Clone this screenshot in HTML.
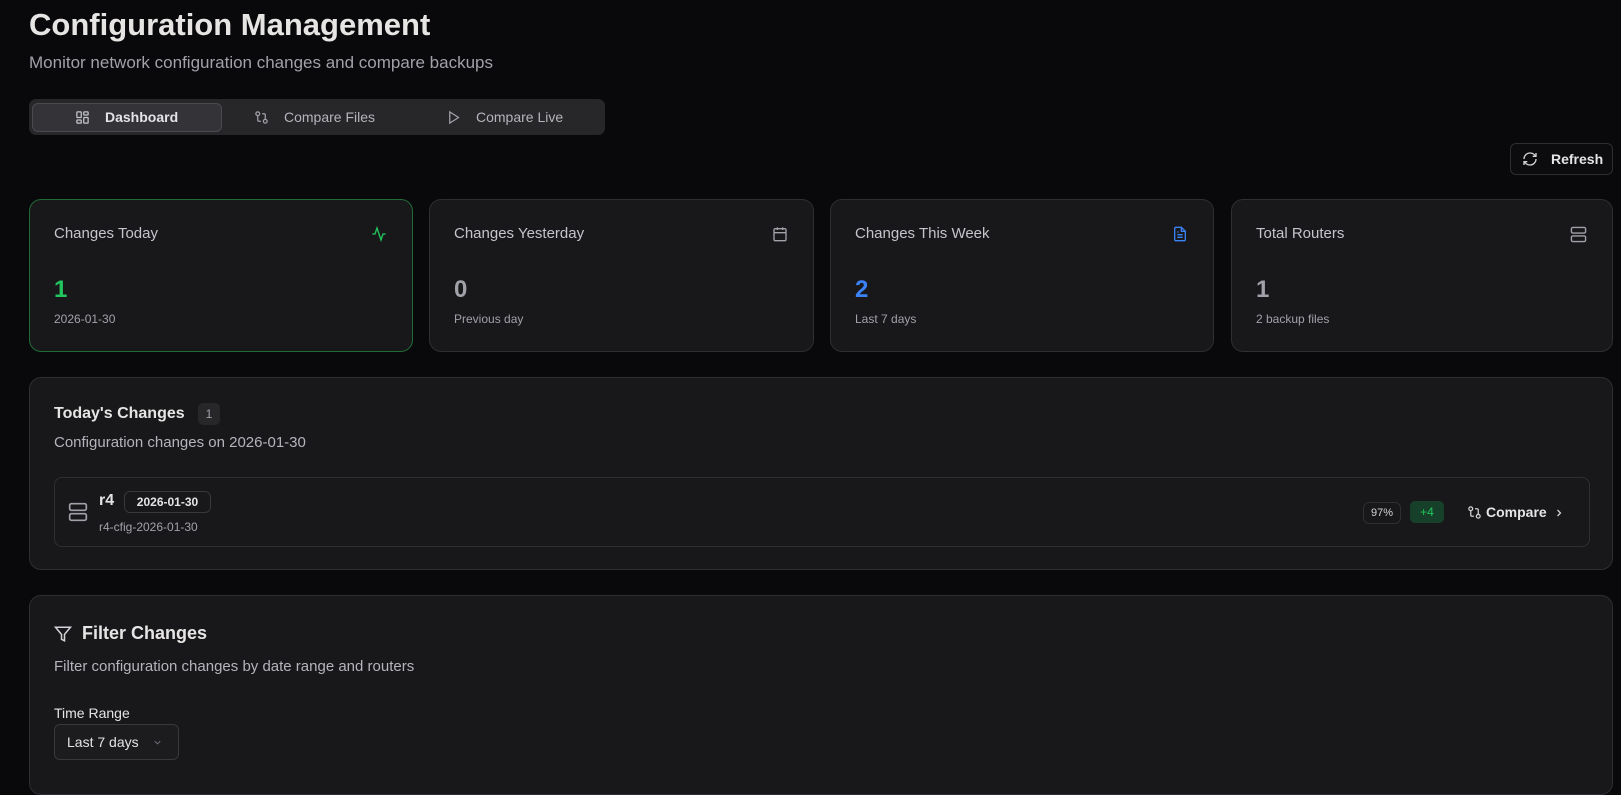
<!DOCTYPE html>
<html><head><meta charset="utf-8"><style>
*{box-sizing:border-box;margin:0;padding:0}
body{width:1621px;height:775px;overflow:hidden;background:#09090b;font-family:"Liberation Sans",sans-serif;color:#e4e4e7;position:relative}
.a{position:absolute}
.card{position:absolute;background:#18181b;border:1px solid #2e2e33;border-radius:12px}
svg{display:block}
.lbl{position:absolute;left:24px;top:25px;font-size:15px;color:#c4c4cc}
.num{position:absolute;left:24px;top:76px;font-size:24px;font-weight:bold;color:#a1a1aa}
.sub{position:absolute;left:24px;top:112px;font-size:12px;color:#a1a1aa}
.ic{position:absolute;right:32px;top:26px}
</style></head><body>
<div class="a" style="left:29px;top:7px;font-size:31px;font-weight:bold;color:#e7e5e4">Configuration Management</div>
<div class="a" style="left:29px;top:53px;font-size:17px;color:#a1a1aa">Monitor network configuration changes and compare backups</div>

<div class="a" style="left:29px;top:99px;width:576px;height:36px;background:#27272a;border-radius:7px"></div>
<div class="a" style="left:32px;top:103px;width:190px;height:29px;background:#333338;border:1px solid #4a4a50;border-radius:6px"></div>
<svg class="a" style="left:75px;top:110px" width="15" height="15" viewBox="0 0 24 24" fill="none" stroke="#c4c4cc" stroke-width="2"><rect x="3" y="3" width="7" height="9" rx="1"/><rect x="14" y="3" width="7" height="5" rx="1"/><rect x="14" y="12" width="7" height="9" rx="1"/><rect x="3" y="16" width="7" height="5" rx="1"/></svg>
<div class="a" style="left:105px;top:109px;font-size:14px;font-weight:bold;color:#e4e4e7">Dashboard</div>
<svg class="a" style="left:254px;top:110px" width="15" height="15" viewBox="0 0 24 24" fill="none" stroke="#a1a1aa" stroke-width="2"><circle cx="18" cy="18" r="3"/><circle cx="6" cy="6" r="3"/><path d="M13 6h3a2 2 0 0 1 2 2v7"/><path d="M11 18H8a2 2 0 0 1-2-2V9"/></svg>
<div class="a" style="left:284px;top:109px;font-size:14px;color:#b4b4bc">Compare Files</div>
<svg class="a" style="left:446px;top:110px" width="15" height="15" viewBox="0 0 24 24" fill="none" stroke="#a1a1aa" stroke-width="2"><path d="M6 3l14 9-14 9z"/></svg>
<div class="a" style="left:476px;top:109px;font-size:14px;color:#b4b4bc">Compare Live</div>

<div class="a" style="left:1510px;top:143px;width:103px;height:32px;border:1px solid #2e2e33;border-radius:6px;background:#0c0c0e"></div>
<svg class="a" style="left:1522px;top:151px" width="16" height="16" viewBox="0 0 24 24" fill="none" stroke="#d4d4d8" stroke-width="2"><path d="M3 12a9 9 0 0 1 9-9 9.75 9.75 0 0 1 6.74 2.74L21 8"/><path d="M21 3v5h-5"/><path d="M21 12a9 9 0 0 1-9 9 9.75 9.75 0 0 1-6.74-2.74L3 16"/><path d="M8 16H3v5"/></svg>
<div class="a" style="left:1551px;top:151px;font-size:14px;font-weight:bold;color:#e4e4e7">Refresh</div>

<div class="card" style="left:29px;top:199px;width:384px;height:153px;border-color:#1f6b37">
<div class="lbl">Changes Today</div>
<svg class="ic" style="right:25px" width="16" height="16" viewBox="0 0 24 24" fill="none" stroke="#22c55e" stroke-width="2"><path d="M22 12h-4l-3 9L9 3l-3 9H2"/></svg>
<div class="num" style="color:#22c55e">1</div><div class="sub">2026-01-30</div></div>
<div class="card" style="left:429px;top:199px;width:385px;height:153px">
<div class="lbl">Changes Yesterday</div>
<svg class="ic" style="right:25px" width="16" height="16" viewBox="0 0 24 24" fill="none" stroke="#a1a1aa" stroke-width="2"><rect x="3" y="4" width="18" height="18" rx="2"/><path d="M16 2v4M8 2v4M3 10h18"/></svg>
<div class="num">0</div><div class="sub">Previous day</div></div>
<div class="card" style="left:830px;top:199px;width:384px;height:153px">
<div class="lbl">Changes This Week</div>
<svg class="ic" style="right:25px" width="16" height="16" viewBox="0 0 24 24" fill="none" stroke="#3b82f6" stroke-width="2"><path d="M14 2H6a2 2 0 0 0-2 2v16a2 2 0 0 0 2 2h12a2 2 0 0 0 2-2V8z"/><path d="M14 2v6h6M16 13H8M16 17H8M10 9H8"/></svg>
<div class="num" style="color:#3b82f6">2</div><div class="sub">Last 7 days</div></div>
<div class="card" style="left:1231px;top:199px;width:382px;height:153px">
<div class="lbl">Total Routers</div>
<svg class="ic" style="right:25px" width="17" height="17" viewBox="0 0 24 24" fill="none" stroke="#a1a1aa" stroke-width="2"><rect x="2" y="2" width="20" height="8" rx="2"/><rect x="2" y="14" width="20" height="8" rx="2"/><path d="M6 6h.01M6 18h.01"/></svg>
<div class="num">1</div><div class="sub">2 backup files</div></div>

<div class="card" style="left:29px;top:377px;width:1584px;height:193px">
<div class="a" style="left:24px;top:27px;font-size:16px;font-weight:bold;color:#e7e5e4">Today's Changes</div>
<div class="a" style="left:168px;top:25px;width:22px;height:22px;background:#27272a;border-radius:5px;font-size:12px;color:#a1a1aa;text-align:center;line-height:22px">1</div>
<div class="a" style="left:24px;top:56px;font-size:15px;color:#b4b4bc">Configuration changes on 2026-01-30</div>
<div class="a" style="left:24px;top:99px;width:1536px;height:70px;border:1px solid #2e2e33;border-radius:8px">
<svg class="a" style="left:13px;top:24px" width="20" height="20" viewBox="0 0 24 24" fill="none" stroke="#a1a1aa" stroke-width="2"><rect x="2" y="2" width="20" height="8" rx="2"/><rect x="2" y="14" width="20" height="8" rx="2"/></svg>
<div class="a" style="left:44px;top:14px;font-size:16px;font-weight:bold;color:#e4e4e7">r4</div>
<div class="a" style="left:69px;top:13px;width:87px;height:22px;border:1px solid #38383d;border-radius:6px;font-size:12px;font-weight:bold;color:#e4e4e7;text-align:center;line-height:20px">2026-01-30</div>
<div class="a" style="left:44px;top:42px;font-size:12px;color:#a1a1aa">r4-cfig-2026-01-30</div>
<div class="a" style="left:1308px;top:24px;width:38px;height:22px;border:1px solid #2e2e33;border-radius:6px;font-size:11px;color:#d4d4d8;text-align:center;line-height:20px">97%</div>
<div class="a" style="left:1355px;top:23px;width:34px;height:22px;background:#16402a;border-radius:5px;font-size:12px;color:#22c55e;text-align:center;line-height:22px">+4</div>
<svg class="a" style="left:1412px;top:27px" width="15" height="15" viewBox="0 0 24 24" fill="none" stroke="#d4d4d8" stroke-width="2"><circle cx="18" cy="18" r="3"/><circle cx="6" cy="6" r="3"/><path d="M13 6h3a2 2 0 0 1 2 2v7"/><path d="M11 18H8a2 2 0 0 1-2-2V9"/></svg>
<div class="a" style="left:1431px;top:26px;font-size:14px;font-weight:bold;color:#e4e4e7">Compare</div>
<svg class="a" style="left:1498px;top:29px" width="12" height="12" viewBox="0 0 24 24" fill="none" stroke="#d4d4d8" stroke-width="2.5"><path d="M9 18l6-6-6-6"/></svg>
</div></div>

<div class="card" style="left:29px;top:595px;width:1584px;height:200px">
<svg class="a" style="left:24px;top:29px" width="18" height="18" viewBox="0 0 24 24" fill="none" stroke="#d4d4d8" stroke-width="2"><path d="M22 3H2l8 9.46V19l4 2v-8.54z"/></svg>
<div class="a" style="left:52px;top:27px;font-size:18px;font-weight:bold;color:#e7e5e4">Filter Changes</div>
<div class="a" style="left:24px;top:62px;font-size:15px;color:#b4b4bc">Filter configuration changes by date range and routers</div>
<div class="a" style="left:24px;top:109px;font-size:14px;color:#e4e4e7">Time Range</div>
<div class="a" style="left:24px;top:128px;width:125px;height:36px;border:1px solid #38383d;border-radius:6px;background:#1c1c1f">
<div class="a" style="left:12px;top:9px;font-size:14px;color:#e4e4e7">Last 7 days</div>
<svg class="a" style="left:97px;top:12px" width="11" height="11" viewBox="0 0 24 24" fill="none" stroke="#71717a" stroke-width="2"><path d="M6 9l6 6 6-6"/></svg>
</div></div>
</body></html>
